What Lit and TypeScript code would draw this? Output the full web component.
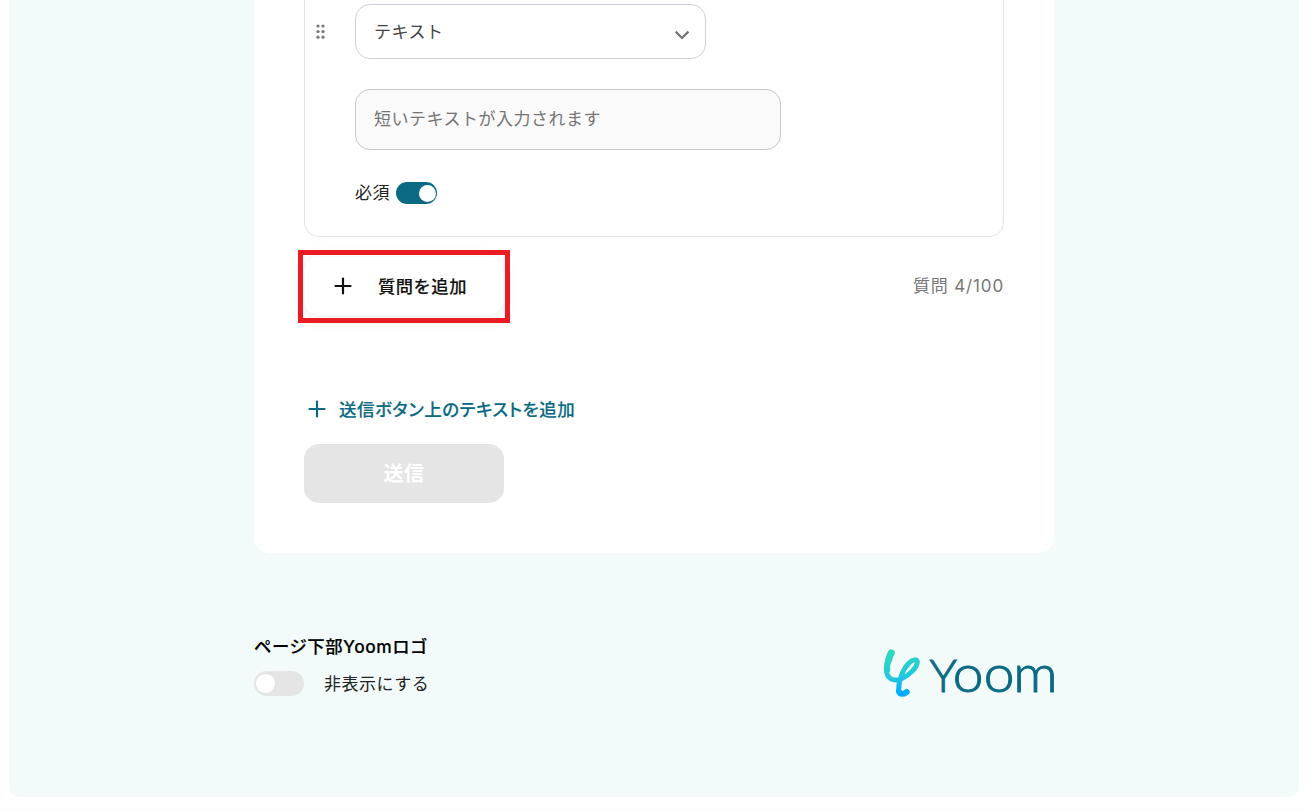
import { LitElement, html, svg, css } from "lit";
import { customElement, property } from "lit/decorators.js";

@customElement("toggle-switch")
export class ToggleSwitch extends LitElement {
  @property({ type: Boolean, reflect: true }) checked = false;

  static styles = css`
    :host {
      display: flex;
      align-items: center;
      box-sizing: border-box;
      width: 50px;
      height: 25px;
      padding: 0 2px;
      border-radius: 13px;
      background: #e5e5e5;
    }
    :host([checked]) {
      justify-content: flex-end;
      width: 41px;
      height: 22px;
      padding: 0 1px;
      background: #0b6a83;
    }
    .knob {
      width: 19px;
      height: 19px;
      border-radius: 50%;
      background: #fff;
    }
    :host([checked]) .knob {
      width: 17px;
      height: 17px;
    }
  `;

  render() {
    return html`<div class="knob"></div>`;
  }
}

@customElement("yoom-logo")
export class YoomLogo extends LitElement {
  static styles = css`
    :host {
      display: block;
      height: 50px;
    }
    .mark {
      fill: none;
      stroke: url(#fade);
      stroke-linecap: round;
      stroke-linejoin: round;
    }
    .word {
      font: 300 51px Lato, sans-serif;
      letter-spacing: 0;
      fill: #0b6a83;
      stroke: #0b6a83;
      stroke-width: 1px;
    }
    .cap {
      font-size: 46px;
    }
  `;

  render() {
    return html`
      <svg width="171" height="50" viewBox="0 0 171 50" overflow="visible">
        <defs>
          <linearGradient id="fade" gradientUnits="userSpaceOnUse" x1="8" y1="0" x2="18" y2="48">
            <stop offset="0" stop-color="#33dbb5" />
            <stop offset="0.6" stop-color="#23c8de" />
            <stop offset="0.95" stop-color="#04aaff" />
          </linearGradient>
        </defs>
        <g class="mark">
          <path stroke-width="7" d="M8.3 4.8 C7 7.5 6.2 9.5 5.6 12" />
          <path stroke-width="6" d="M7.6 6 C5.5 11 3.6 16 4.2 22" />
          <path stroke-width="5" d="M4.6 13 C3.2 18 3 22 4 26 C6 31.5 12 33.5 18 31 C27 27 34.3 19 34.3 14 C34.3 11 30 11 26 15 C20 21 15.5 32 15.5 43" />
          <path stroke-width="6" d="M16 43.5 C17 46.5 21 46.5 23.7 44" />
        </g>
        <text class="word cap" x="46.5" y="44">Y</text>
        <text class="word" transform="scale(1.08 1)" x="64.6 93.3 120.6" y="44">oom</text>
      </svg>
    `;
  }
}

@customElement("app-root")
export class AppRoot extends LitElement {
  static styles = css`
    :host {
      display: block;
      box-sizing: border-box;
      height: 810px;
      padding: 0 8px 0 9px;
      overflow: hidden;
      background: linear-gradient(#fff 808px, #fdfdfd 808px);
      color: #222;
      font: 400 17px/26px Inter, "Noto Sans CJK JP", sans-serif;
      letter-spacing: 0.5px;
    }
    .page {
      box-sizing: border-box;
      height: 797px;
      padding: 0 245px;
      border-radius: 0 0 10px 10px;
      background: #f2fbfa;
    }
    .card {
      box-sizing: border-box;
      height: 553px;
      padding: 0 50px;
      border-radius: 0 0 15px 15px;
      background: #fff;
    }
    .question {
      display: flex;
      box-sizing: border-box;
      height: 237px;
      border: 1px solid #e5e5e5;
      border-top: 0;
      border-radius: 0 0 15px 15px;
    }
    .handle {
      width: 50px;
      padding: 21px 0 0 11px;
      box-sizing: border-box;
    }
    .fields {
      padding-top: 4px;
    }
    .select,
    .preview {
      display: flex;
      box-sizing: border-box;
      padding: 0 15px 0 18px;
      border: 1px solid #ccd2da;
      border-radius: 15px;
    }
    .select {
      align-items: center;
      justify-content: space-between;
      width: 351px;
      height: 55px;
      color: #444;
    }
    .chevron {
      margin-top: 6px;
    }
    .preview {
      align-items: center;
      width: 426px;
      height: 61px;
      margin-top: 30px;
      padding-bottom: 2px;
      border-color: #c8c8c8;
      background: #fafafa;
      color: #757575;
    }
    .required {
      display: flex;
      align-items: center;
      gap: 6px;
      margin-top: 30px;
    }
    .actions {
      display: flex;
      justify-content: space-between;
      height: 73px;
      padding-top: 13px;
      margin-left: -6px;
    }
    .frame {
      box-sizing: border-box;
      width: 212px;
      height: 73px;
      padding: 2px 0 0 1px;
      border: 5px solid #ee1c25;
    }
    .add {
      display: flex;
      align-items: center;
      gap: 26px;
      box-sizing: border-box;
      width: 199px;
      height: 58px;
      padding: 0 0 0 30px;
      border-radius: 15px;
      box-shadow: 0 3px 20px rgba(0, 0, 0, 0.08);
      font-size: 17.3px;
      font-weight: 500;
      color: #111;
    }
    .add span {
      padding-top: 1px;
    }
    .add span,
    .add-text span,
    .title {
      -webkit-text-stroke: 0.15px currentColor;
    }
    .count {
      padding-top: 23px;
      color: #777;
      letter-spacing: 0.85px;
    }
    .add-text {
      display: flex;
      align-items: center;
      gap: 13px;
      margin-top: 73px;
      padding-left: 4px;
      color: #0b6a83;
      font-size: 17.5px;
      font-weight: 500;
      font-feature-settings: "palt";
    }
    .add-text svg {
      margin-bottom: 1px;
    }
    .add-text span {
      padding-top: 1px;
    }
    .submit {
      display: flex;
      align-items: center;
      justify-content: center;
      width: 200px;
      height: 59px;
      margin-top: 21px;
      border-radius: 15px;
      background: #e5e5e5;
      color: #fff;
      font-size: 20px;
      font-weight: 700;
    }
    .footer {
      display: flex;
      justify-content: space-between;
      padding-top: 81px;
    }
    .title {
      color: #000;
      font-size: 17.4px;
      font-weight: 500;
    }
    .hide {
      display: flex;
      align-items: center;
      gap: 20px;
      margin-top: 10px;
    }
    .hide span {
      padding-top: 1px;
      margin-bottom: -1px;
    }
    .logo {
      margin-top: 14px;
    }
  `;

  renderPlus(color: string) {
    return html`
      <svg width="18" height="18" viewBox="0 0 18 18" fill="none" stroke=${color} stroke-width="2.2">
        <path d="M9 1.5V16.5M1.5 9H16.5" stroke-linecap="round" />
      </svg>
    `;
  }

  renderDots() {
    return [2, 7.6, 13.2].map(
      (y) => svg`<circle cx="2" cy=${y} r="1.6" /><circle cx="7" cy=${y} r="1.6" />`
    );
  }

  render() {
    return html`
      <div class="page">
        <div class="card">
          <div class="question">
            <div class="handle">
              <svg width="9" height="16" viewBox="0 0 9 16" fill="#757575">${this.renderDots()}</svg>
            </div>
            <div class="fields">
              <div class="select">
                <span>テキスト</span>
                <svg class="chevron" width="16" height="10" viewBox="0 0 16 10" fill="none" stroke="#757575" stroke-width="2.2">
                  <path d="M1.6 1.6L8 8L14.4 1.6" />
                </svg>
              </div>
              <div class="preview">短いテキストが入力されます</div>
              <div class="required">
                <span>必須</span>
                <toggle-switch checked></toggle-switch>
              </div>
            </div>
          </div>
          <div class="actions">
            <div class="frame">
              <div class="add">${this.renderPlus("#111")}<span>質問を追加</span></div>
            </div>
            <div class="count">質問 4/100</div>
          </div>
          <div class="add-text">${this.renderPlus("#0b6a83")}<span>送信ボタン上のテキストを追加</span></div>
          <div class="submit">送信</div>
        </div>
        <div class="footer">
          <div>
            <div class="title">ページ下部Yoomロゴ</div>
            <div class="hide">
              <toggle-switch></toggle-switch>
              <span>非表示にする</span>
            </div>
          </div>
          <yoom-logo class="logo"></yoom-logo>
        </div>
      </div>
    `;
  }
}
